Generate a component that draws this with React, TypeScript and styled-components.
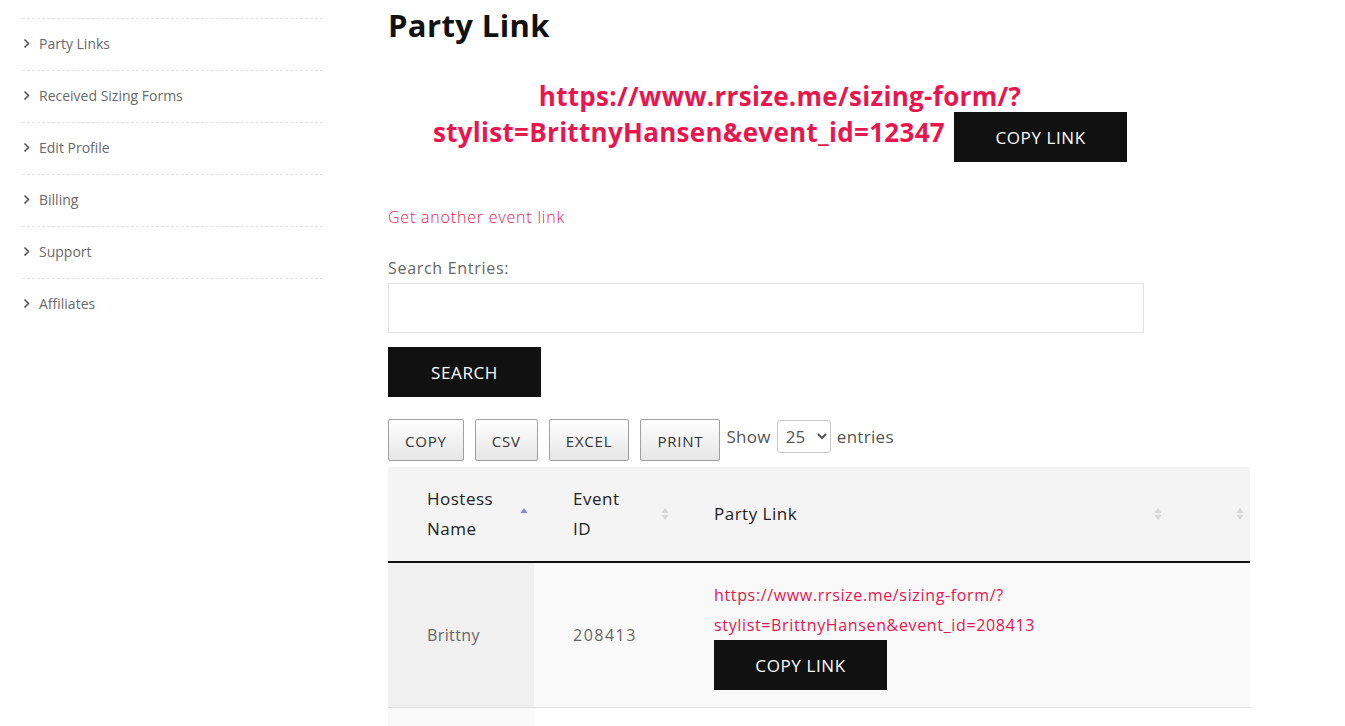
import React from "react";
import styled, { createGlobalStyle } from "styled-components";

const GlobalStyle = createGlobalStyle`
  * { box-sizing: border-box; }
  body {
    margin: 0;
    background: #fff;
    font-family: "Open Sans", Lato, Arial, sans-serif;
    color: #666;
  }
`;

const PINK = "#e8164f";

const menu = [
  "Party Links",
  "Received Sizing Forms",
  "Edit Profile",
  "Billing",
  "Support",
  "Affiliates",
];

const Chevron = () => (
  <svg width="9" height="11" viewBox="0 0 9 11">
    <path d="M2.5 1.5 L6.5 5.5 L2.5 9.5" fill="none" stroke="#555" strokeWidth="1.6" />
  </svg>
);

const SortIcon = ({ active }: { active?: boolean }) => (
  <svg width="8" height="16" viewBox="0 0 8 16">
    <path d="M4 2 L7.5 7 L0.5 7 Z" fill={active ? "#8088d8" : "#d7d7d7"} />
    {!active && <path d="M4 14 L7.5 9 L0.5 9 Z" fill="#d7d7d7" />}
  </svg>
);

export default function App() {
  return (
    <>
      <GlobalStyle />
      <Page>
        <Sidebar>
          {menu.map((m) => (
            <MenuItem key={m}>
              <Chevron />
              <span>{m}</span>
            </MenuItem>
          ))}
        </Sidebar>
        <Main>
          <Title>Party Link</Title>
          <BigLink>
            https://www.rrsize.me/sizing-form/?
            <br />
            stylist=BrittnyHansen&amp;event_id=12347{" "}
            <DarkButton $w={173} $inline>
              COPY LINK
            </DarkButton>
          </BigLink>
          <AnotherLink>Get another event link</AnotherLink>
          <Label>Search Entries:</Label>
          <SearchInput />
          <DarkButton $w={153}>SEARCH</DarkButton>
          <Toolbar>
            <ToolButton>COPY</ToolButton>
            <ToolButton>CSV</ToolButton>
            <ToolButton>EXCEL</ToolButton>
            <ToolButton>PRINT</ToolButton>
            <ShowText>
              Show
              <Select defaultValue="25">
                <option>10</option>
                <option>25</option>
                <option>50</option>
                <option>100</option>
              </Select>
              entries
            </ShowText>
          </Toolbar>
          <Table>
            <colgroup>
              <col style={{ width: 146 }} />
              <col style={{ width: 141 }} />
              <col style={{ width: 493 }} />
              <col style={{ width: 82 }} />
            </colgroup>
            <thead>
              <tr>
                <Th>
                  Hostess
                  <br />
                  Name
                  <SortWrap>
                    <SortIcon active />
                  </SortWrap>
                </Th>
                <Th>
                  Event
                  <br />
                  ID
                  <SortWrap>
                    <SortIcon />
                  </SortWrap>
                </Th>
                <Th>
                  Party Link
                  <SortWrap>
                    <SortIcon />
                  </SortWrap>
                </Th>
                <Th>
                  <SortWrap>
                    <SortIcon />
                  </SortWrap>
                </Th>
              </tr>
            </thead>
            <tbody>
              <Row $odd>
                <Td $sorted>Brittny</Td>
                <Td $num>208413</Td>
                <Td>
                  <RowLink>
                    https://www.rrsize.me/sizing-form/?
                    <br />
                    stylist=BrittnyHansen&amp;event_id=208413
                  </RowLink>
                  <DarkButton $w={173}>COPY LINK</DarkButton>
                </Td>
                <Td />
              </Row>
              <Row>
                <Td $sorted $light>
                  &nbsp;
                </Td>
                <Td />
                <Td />
                <Td />
              </Row>
            </tbody>
          </Table>
        </Main>
      </Page>
    </>
  );
}

const Page = styled.div`
  display: flex;
  gap: 65px;
  padding-left: 22px;
`;

const Sidebar = styled.nav`
  width: 301px;
  flex-shrink: 0;
  padding-top: 18px;
`;

const MenuItem = styled.div`
  display: flex;
  align-items: center;
  gap: 8px;
  height: 52px;
  border-top: 1px dashed #e2e2e2;
  padding-bottom: 2px;
  font-size: 14px;
  color: #6a6a6a;
`;

const Main = styled.main`
  width: 862px;
  flex-shrink: 0;
`;

const Title = styled.h1`
  margin: 5px 0 0;
  font-size: 31px;
  letter-spacing: 0.4px;
  line-height: 40px;
  font-weight: 700;
  color: #111;
`;

const BigLink = styled.div`
  width: 784px;
  margin-top: 33px;
  text-align: center;
  font-size: 26px;
  letter-spacing: 0.3px;
  line-height: 36px;
  font-weight: 700;
  color: ${PINK};
`;

const DarkButton = styled.button<{ $w: number; $inline?: boolean }>`
  display: inline-block;
  width: ${(p) => p.$w}px;
  height: 50px;
  margin: ${(p) => (p.$inline ? "-7px 0 -7px 2px" : "0")};
  position: relative;
  top: ${(p) => (p.$inline ? "2px" : "0")};
  border: none;
  background: #111;
  color: #fff;
  font-family: inherit;
  font-size: 17px;
  letter-spacing: 0.6px;
  font-weight: 400;
  vertical-align: middle;
  cursor: pointer;
  padding: 0;
`;

const AnotherLink = styled.a`
  display: block;
  margin-top: 52px;
  font-size: 16px;
  letter-spacing: 0.8px;
  line-height: 24px;
  color: ${PINK};
  font-weight: 300;
`;

const Label = styled.div`
  margin-top: 27px;
  font-size: 16px;
  letter-spacing: 0.7px;
  line-height: 24px;
  color: #666;
`;

const SearchInput = styled.input`
  display: block;
  width: 756px;
  height: 50px;
  margin: 3px 0 14px;
  border: 1px solid #e2e2e2;
  outline: none;
`;

const Toolbar = styled.div`
  display: flex;
  align-items: flex-start;
  margin-top: 22px;
  margin-bottom: 6px;
`;

const ToolButton = styled.button`
  height: 42px;
  padding: 2px 16px 0;
  margin-right: 11px;
  border: 1px solid #a0a0a0;
  border-radius: 2px;
  background: linear-gradient(to bottom, #ffffff 0%, #e6e6e6 100%);
  color: #333;
  font-family: inherit;
  font-size: 15px;
  letter-spacing: 0.8px;
`;

const ShowText = styled.div`
  display: flex;
  align-items: center;
  gap: 6px;
  margin-left: -5px;
  height: 34px;
  font-size: 17px;
  letter-spacing: 0.3px;
  color: #555;
`;

const Select = styled.select`
  height: 33px;
  width: 54px;
  border: 1px solid #c8c8c8;
  border-radius: 3px;
  background: #fff;
  color: #555;
  font-family: inherit;
  font-size: 17px;
  padding: 0 4px;
`;

const Table = styled.table`
  width: 862px;
  border-collapse: collapse;
  table-layout: fixed;
`;

const Th = styled.th`
  position: relative;
  background: #f4f4f4;
  border-bottom: 2px solid #111;
  padding: 17px 20px 17px 39px;
  text-align: left;
  font-size: 17px;
  letter-spacing: 0.5px;
  line-height: 30px;
  font-weight: 500;
  color: #222;
`;

const SortWrap = styled.span`
  position: absolute;
  right: 6px;
  top: 50%;
  transform: translateY(-50%);
  display: flex;
`;

const Row = styled.tr<{ $odd?: boolean }>`
  background: ${(p) => (p.$odd ? "#f9f9f9" : "#fff")};
  border-bottom: 1px solid #ddd;
`;

const Td = styled.td<{ $sorted?: boolean; $light?: boolean; $num?: boolean }>`
  padding: 17px 20px 17px 39px;
  font-size: 16px;
  letter-spacing: ${(p) => (p.$num ? "1.5px" : "0.4px")};
  line-height: 30px;
  color: #666;
  vertical-align: middle;
  background: ${(p) => (p.$light ? "#f9f9f9" : p.$sorted ? "#f0f0f0" : "transparent")};
`;

const RowLink = styled.a`
  display: block;
  color: ${PINK};
  letter-spacing: 0.65px;
  white-space: nowrap;
`;
